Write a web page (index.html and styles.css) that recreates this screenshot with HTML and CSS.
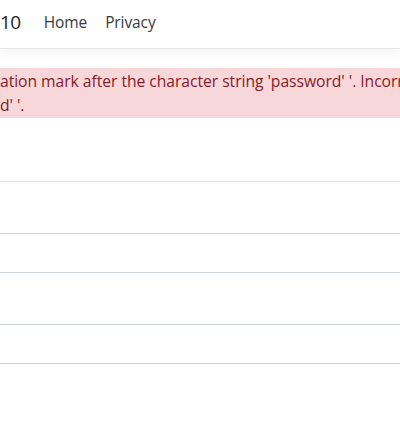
FILE: index.html
```html
<!DOCTYPE html>
<html>
<head>
<meta charset="utf-8">
<link rel="stylesheet" href="styles.css">
</head>
<body>
<header class="navbar">
  <span class="brand">10</span>
  <nav class="nav">
    <a class="nav-link" href="#">Home</a>
    <a class="nav-link" href="#">Privacy</a>
  </nav>
</header>
<main class="main">
  <div class="alert">
    <div class="line">ation mark after the character string 'password' '. Incorrect syntax near</div>
    <div class="line">d' '.</div>
  </div>
  <div class="table">
    <div class="row row-head"></div>
    <div class="row row-tall"></div>
    <div class="row row-short"></div>
    <div class="row row-tall"></div>
    <div class="row row-short"></div>
  </div>
</main>
</body>
</html>
```

FILE: styles.css
```css
html, body {
  margin: 0;
  padding: 0;
  background: #ffffff;
  overflow: hidden;
}
body {
  font-family: "Open Sans", "Noto Sans", sans-serif;
  font-size: 16px;
  color: #212529;
  width: 400px;
  height: 428px;
}
.navbar {
  height: 48px;
  display: flex;
  align-items: center;
  border-bottom: 1px solid #e5e5e5;
  box-shadow: 0 4px 12px rgba(0, 0, 0, 0.05);
  background: #fff;
}
.brand {
  font-size: 19px;
  color: #212529;
  margin-left: 0;
  line-height: 28px;
  margin-top: -4px;
  letter-spacing: -0.5px;
}
.nav {
  display: flex;
  margin-left: 14px;
  margin-top: -5px;
}
.nav-link {
  color: #343a40;
  text-decoration: none;
  padding: 8px 9px;
  font-size: 15.5px;
  line-height: 24px;
  letter-spacing: -0.1px;
}
.main {
  margin-top: 19px;
}
.alert {
  background: #f8d7da;
  color: #842029;
  padding: 1px 0 1px 0;
  line-height: 24px;
  white-space: nowrap;
  overflow: hidden;
  font-size: 15.7px;
  letter-spacing: -0.05px;
}
.line {
  white-space: nowrap;
}
.table {
  margin-top: 63px;
}
.row {
  border-bottom: 1px solid #ced4da;
}
.row-head {
  height: 0;
  border-bottom-color: #dee2e6;
}
.row-tall {
  height: 51px;
}
.row-short {
  height: 38px;
}
```
